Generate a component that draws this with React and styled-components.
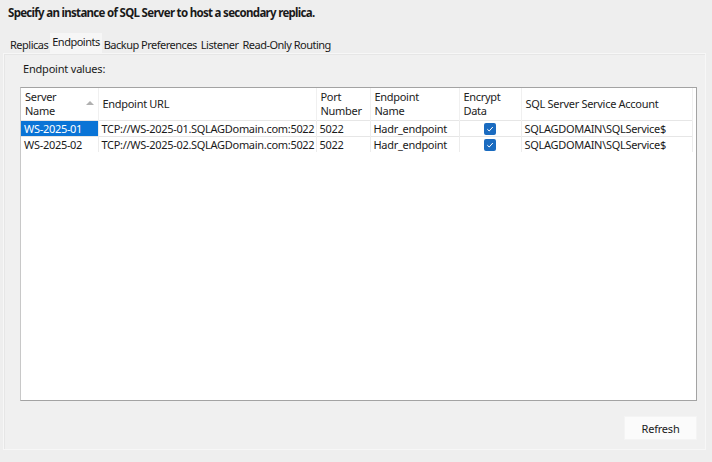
import React from "react";
import styled, { createGlobalStyle } from "styled-components";

const GlobalStyle = createGlobalStyle`
  html, body {
    margin: 0;
    padding: 0;
    background: #eeeeee;
  }
  body {
    font-family: "Noto Sans", "Open Sans", sans-serif;
    color: #1a1a1a;
  }
`;

const Page = styled.div`
  width: 712px;
  height: 462px;
  display: flex;
  flex-direction: column;
  box-sizing: border-box;
  overflow: hidden;
`;

const Title = styled.div`
  font-size: 11.5px;
  font-weight: 700;
  padding: 5px 0 0 8px;
  height: 30px;
  letter-spacing: -0.7px;
  box-sizing: border-box;
`;

const TabStrip = styled.div`
  display: flex;
  align-items: flex-end;
  padding-left: 8px;
  height: 23px;
`;

const Tab = styled.div`
  font-size: 11px;
  letter-spacing: -0.5px;
  padding: 0 2px 3px;
  height: ${(p) => (p.$active ? "20px" : "15px")};
  line-height: ${(p) => (p.$active ? "17px" : "13px")};
  background: ${(p) => (p.$active ? "#f6f6f6" : "transparent")};
  box-sizing: border-box;
`;

const TabPanel = styled.div`
  margin: 0 6px 0 3px;
  height: 397px;
  background: #f0f0f0;
  border: 1px solid #f7f7f7;
  box-shadow: inset 1px 1px 0 #e6e6e6;
  display: flex;
  flex-direction: column;
  padding: 7px 8px 0 16px;
  box-sizing: border-box;
`;

const Label = styled.div`
  font-size: 11px;
  letter-spacing: -0.2px;
  padding-left: 3px;
  height: 26px;
`;

const GridBox = styled.div`
  background: #ffffff;
  border: 1px solid #a3a3a3;
  border-left-color: #c8c8c8;
  height: 314px;
  box-sizing: border-box;
`;

const Table = styled.table`
  width: 671px;
  border-collapse: collapse;
  table-layout: fixed;
  font-size: 11px;
  letter-spacing: -0.3px;
`;

const Col = styled.col`
  width: ${(p) => p.$w}px;
`;

const HeadCell = styled.th`
  height: 32px;
  text-align: left;
  font-weight: 400;
  line-height: 14px;
  vertical-align: middle;
  padding: 0 4px;
  border-right: 1px solid #f0f0f0;
  position: relative;
  box-sizing: border-box;
  color: #222;
  white-space: nowrap;
`;

const SortArrow = styled.span`
  position: absolute;
  right: 4px;
  top: 13px;
  width: 0;
  height: 0;
  border-left: 4px solid transparent;
  border-right: 4px solid transparent;
  border-bottom: 4px solid #b0b0b0;
`;

const Row = styled.tr`
  height: 16px;
  border-top: 1px solid #e6e6e6;
`;

const Cell = styled.td`
  padding: 0 3px;
  height: 15px;
  line-height: 15px;
  white-space: nowrap;
  overflow: hidden;
  border-right: 1px solid #ececec;
  background: ${(p) => (p.$selected ? "#0a74d6" : "transparent")};
  color: ${(p) => (p.$selected ? "#ffffff" : "#1a1a1a")};
  text-align: ${(p) => (p.$center ? "center" : "left")};
  box-sizing: border-box;
`;

const Check = styled.span`
  display: inline-flex;
  align-items: center;
  justify-content: center;
  width: 12px;
  height: 12px;
  border-radius: 2px;
  background: #1a6bc0;
  vertical-align: middle;
  margin-top: -2px;
`;

const Footer = styled.div`
  display: flex;
  justify-content: flex-end;
  padding-top: 15px;
`;

const Button = styled.button`
  width: 73px;
  height: 24px;
  background: #fbfbfb;
  border: 1px solid #f4f4f4;
  font-family: inherit;
  font-size: 11px;
  letter-spacing: -0.2px;
  color: #1a1a1a;
  padding: 0;
`;

const columns = [
  { key: "server", w: 77, label: ["Server", "Name"], sort: true },
  { key: "url", w: 218, label: ["Endpoint URL"] },
  { key: "port", w: 54, label: ["Port", "Number"] },
  { key: "name", w: 89, label: ["Endpoint", "Name"] },
  { key: "enc", w: 62, label: ["Encrypt", "Data"] },
  { key: "acct", w: 171, label: ["SQL Server Service Account"] },
];

const rows = [
  {
    server: "WS-2025-01",
    url: "TCP://WS-2025-01.SQLAGDomain.com:5022",
    port: "5022",
    name: "Hadr_endpoint",
    acct: "SQLAGDOMAIN\\SQLService$",
  },
  {
    server: "WS-2025-02",
    url: "TCP://WS-2025-02.SQLAGDomain.com:5022",
    port: "5022",
    name: "Hadr_endpoint",
    acct: "SQLAGDOMAIN\\SQLService$",
  },
];

const CheckMark = () => (
  <Check>
    <svg width="8" height="8" viewBox="0 0 8 8">
      <path d="M1.3 4.2 L3.2 6 L6.8 2" fill="none" stroke="#fff" strokeWidth="1" />
    </svg>
  </Check>
);

export default function App() {
  const tabs = ["Replicas", "Endpoints", "Backup Preferences", "Listener", "Read-Only Routing"];
  return (
    <Page>
      <GlobalStyle />
      <Title>Specify an instance of SQL Server to host a secondary replica.</Title>
      <TabStrip>
        {tabs.map((t) => (
          <Tab key={t} $active={t === "Endpoints"}>
            {t}
          </Tab>
        ))}
      </TabStrip>
      <TabPanel>
        <Label>Endpoint values:</Label>
        <GridBox>
          <Table>
            <colgroup>
              {columns.map((c) => (
                <Col key={c.key} $w={c.w} />
              ))}
            </colgroup>
            <thead>
              <tr>
                {columns.map((c) => (
                  <HeadCell key={c.key}>
                    {c.label.map((l, i) => (
                      <div key={i}>{l}</div>
                    ))}
                    {c.sort && <SortArrow />}
                  </HeadCell>
                ))}
              </tr>
            </thead>
            <tbody>
              {rows.map((r, i) => (
                <Row key={r.server}>
                  <Cell $selected={i === 0}>{r.server}</Cell>
                  <Cell>{r.url}</Cell>
                  <Cell>{r.port}</Cell>
                  <Cell>{r.name}</Cell>
                  <Cell $center>
                    <CheckMark />
                  </Cell>
                  <Cell>{r.acct}</Cell>
                </Row>
              ))}
            </tbody>
          </Table>
        </GridBox>
        <Footer>
          <Button>Refresh</Button>
        </Footer>
      </TabPanel>
    </Page>
  );
}
